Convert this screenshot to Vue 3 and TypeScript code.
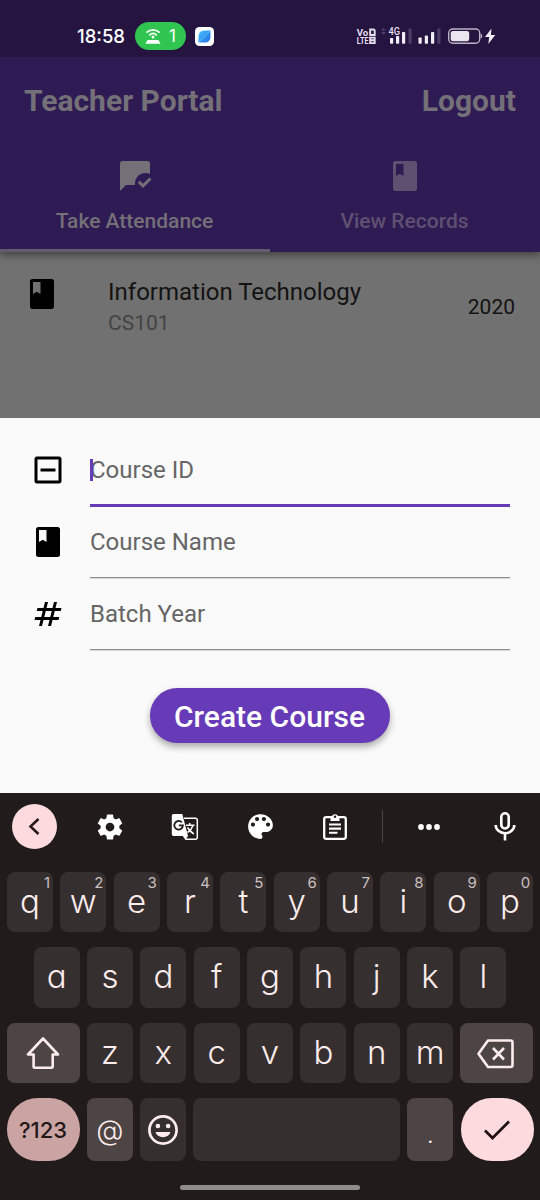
<script setup lang="ts">
import { ref } from 'vue'

interface Key {
  label: string
  hint?: string
}

interface Field {
  label: string
  icon: string
}

const bookIcon =
  'M18.5 2h-13C4.67 2 4 2.67 4 3.5v17c0 .83.67 1.5 1.5 1.5h13c.83 0 1.5-.67 1.5-1.5v-17c0-.83-.67-1.5-1.5-1.5zM6 4h5v8l-2.500-1.500L6 12V4z'
const chatReadIcon =
  'M12 17c0-3.870 3.130-7 7-7 1.080 0 2.090.250 3 .680V3.500C22 2.700 21.300 2 20.500 2h-17C2.700 2 2 2.700 2 3.500V22l4-4h6v0c0-.170.010-.330.030-.500C12.010 17.340 12 17.170 12 17zM23 14.340l-1.410-1.410-4.240 4.240-2.120-2.120-1.410 1.410L17.340 20 23 14.340z'
const boxMinusIcon =
  'M19.500 3h-15C3.700 3 3 3.700 3 4.500v15c0 .8.700 1.500 1.500 1.500h15c.8 0 1.500-.7 1.500-1.500v-15c0-.8-.7-1.500-1.500-1.500zM19 19H5V5h14v14zM7 11h10v2H7z'
const numbersIcon =
  'M20.500 10L21 8h-4l1-4h-2l-1 4h-4l1-4h-2L9 8H5l-.5 2h4l-1 4h-4L3 16h4l-1 4h2l1-4h4l-1 4h2l1-4h4l.5-2h-4l1-4h4zM13.500 14h-4l1-4h4l-1 4z'

const fields: Field[] = [
  { label: 'Course ID', icon: boxMinusIcon },
  { label: 'Course Name', icon: bookIcon },
  { label: 'Batch Year', icon: numbersIcon },
]
const focused = ref(0)

const topRow: Key[] = [...'qwertyuiop'].map((label, i) => ({ label, hint: String((i + 1) % 10) }))
const homeRow: Key[] = [...'asdfghjkl'].map((label) => ({ label }))
const lowerRow: Key[] = [...'zxcvbnm'].map((label) => ({ label }))
</script>

<template>
  <div class="phone">
    <header class="appbar">
      <div class="status">
        <span class="clock">18:58</span>
        <span class="hotspot">
          <svg width="16" height="18" viewBox="0 0 16 18">
            <g fill="none" stroke="#fff" stroke-width="1.7" stroke-linecap="round">
              <path d="M2 5.200a9 9 0 0 1 12 0" />
              <path d="M4.700 7.900a5 5 0 0 1 6.600 0" />
            </g>
            <circle cx="8" cy="9.900" r="1.500" fill="#fff" />
            <path d="M2.500 13h11l2 3.700H.5z" fill="#fff" />
          </svg>
          <b>1</b>
        </span>
        <svg class="app-badge" width="19" height="19" viewBox="0 0 19 19">
          <defs>
            <linearGradient id="leaf" x1="0" y1="0" x2="1" y2="1">
              <stop offset="0" stop-color="#4cc3fa" />
              <stop offset="1" stop-color="#1b6ae8" />
            </linearGradient>
          </defs>
          <rect width="19" height="19" rx="4.500" fill="#fff" />
          <path d="M3.500 15.500V9.500Q3.500 3.500 9.500 3.500H15.500V9.500Q15.500 15.500 9.500 15.500z" fill="url(#leaf)" />
          <path d="M4 15L15 4" stroke="#75d8ff" stroke-width=".6" />
        </svg>
        <svg class="signals" width="142" height="20" viewBox="355 26 142 20">
          <g fill="#e4dff0" font-family="Roboto, sans-serif" font-weight="700">
            <text x="356.800" y="35.500" font-size="9" textLength="11.500" lengthAdjust="spacingAndGlyphs">Vo</text>
            <text x="356.800" y="44" font-size="9" textLength="11.800" lengthAdjust="spacingAndGlyphs">LTE</text>
            <text x="388.500" y="35.400" font-size="10.500" font-weight="500" textLength="11.500" lengthAdjust="spacingAndGlyphs">4G</text>
          </g>
          <g fill="none" stroke="#e4dff0" stroke-width="1.900">
            <path d="M370.200 29.500h3.300q1.200 0 1.200 1.200v4.300h-4.500zM370.200 37.600h4.500v5.500h-4.500zM370.200 40.300h4.500" />
          </g>
          <path d="M381 30.500l2.500-2.500 2.500 2.500zM381 32l2.500 2.500 2.500-2.500z" fill="#51436a" />
          <g fill="#f0edf6">
            <rect x="390" y="38" width="3.200" height="5.700" rx=".8" />
            <rect x="396" y="36" width="3.200" height="7.700" rx=".8" />
            <rect x="402" y="32" width="3.200" height="11.700" rx=".8" />
            <rect x="418.500" y="37.500" width="3.200" height="6.200" rx=".8" />
            <rect x="424.800" y="35.500" width="3.200" height="8.200" rx=".8" />
            <rect x="431" y="32" width="3.200" height="11.700" rx=".8" />
          </g>
          <g fill="#4b3d65">
            <rect x="408.500" y="28.500" width="3.200" height="15.200" rx=".8" />
            <rect x="437.300" y="28.500" width="3.200" height="15.200" rx=".8" />
          </g>
          <rect x="448.700" y="29" width="31" height="14.300" rx="4" fill="none" stroke="#b9b1c6" stroke-width="1.400" />
          <rect x="450.700" y="31" width="18.500" height="10.300" rx="2.300" fill="#e9e5ee" />
          <path d="M480.700 33.500q1.600.5 1.600 2.500t-1.600 2.500z" fill="#b9b1c6" />
          <path d="M491.500 28.500L485 37h4.200l-.9 7L495.300 35h-4.400z" fill="#f0edf6" />
        </svg>
      </div>

      <div class="toolbar">
        <h1>Teacher Portal</h1>
        <span class="logout">Logout</span>
      </div>

      <nav class="tabs">
        <div class="tab active">
          <svg class="icon" viewBox="0 0 24 24"><path :d="chatReadIcon" /></svg>
          <span>Take Attendance</span>
        </div>
        <div class="tab">
          <svg class="icon" viewBox="0 0 24 24"><path :d="bookIcon" /></svg>
          <span>View Records</span>
        </div>
      </nav>
    </header>

    <main class="list">
      <div class="tile">
        <svg class="icon" viewBox="0 0 24 24"><path :d="bookIcon" /></svg>
        <div class="tile-text">
          <span class="tile-title">Information Technology</span>
          <span class="tile-sub">CS101</span>
        </div>
        <span class="tile-year">2020</span>
      </div>
    </main>

    <section class="sheet">
      <div v-for="(field, i) in fields" :key="field.label" class="field-row">
        <svg class="icon" viewBox="0 0 24 24"><path :d="field.icon" /></svg>
        <div class="field" :class="{ focused: i === focused }">
          <i v-if="i === focused" class="caret"></i>
          <span>{{ field.label }}</span>
        </div>
      </div>
      <button class="create">Create Course</button>
    </section>

    <section class="keyboard">
      <div class="tools">
        <span class="back">
          <svg width="45" height="45" viewBox="0 0 45 45">
            <path d="M26.500 15L18.500 22.500L26.500 30" fill="none" stroke="#2b1a1c" stroke-width="2.600" />
          </svg>
        </span>
        <svg width="30" height="30" viewBox="0 0 24 24" fill="#fff">
          <path
            d="M19.430 12.980c.040-.320.070-.640.070-.980s-.030-.660-.070-.980l2.110-1.650c.190-.150.240-.420.120-.640l-2-3.460c-.120-.220-.390-.300-.610-.220l-2.490 1c-.520-.400-1.080-.730-1.690-.980l-.380-2.650C14.460 2.180 14.250 2 14 2h-4c-.250 0-.460.180-.490.420l-.380 2.650c-.610.250-1.170.590-1.690.980l-2.490-1c-.230-.090-.490 0-.610.220l-2 3.460c-.130.220-.070.490.120.640l2.110 1.650c-.040.320-.070.650-.070.980s.030.660.070.980l-2.110 1.650c-.190.150-.240.420-.120.640l2 3.460c.120.220.390.300.610.220l2.490-1c.520.400 1.080.730 1.690.980l.380 2.650c.030.240.240.420.490.420h4c.250 0 .460-.180.490-.420l.380-2.650c.610-.250 1.170-.590 1.690-.980l2.490 1c.230.090.490 0 .610-.220l2-3.460c.120-.220.070-.490-.120-.640l-2.110-1.650zM12 15.500c-1.930 0-3.500-1.570-3.500-3.500s1.570-3.500 3.500-3.500 3.500 1.570 3.500 3.500-1.570 3.500-3.500 3.500z"
          />
        </svg>
        <svg width="28" height="28" viewBox="0 0 28 28">
          <path d="M13 5.300H24.500a1.800 1.800 0 0 1 1.800 1.800V24.500a1.800 1.800 0 0 1-1.800 1.800H15L12 22" fill="none" stroke="#fff" stroke-width="1.500" />
          <path d="M2.500 1H11.300L17 23H2.500A1.700 1.700 0 0 1 .8 21.300V2.700A1.700 1.700 0 0 1 2.500 1z" fill="#fff" />
          <path d="M12.500 23H17L14.500 26.500z" fill="#fff" />
          <path d="M10.800 9.400A4.300 4.300 0 1 0 11.900 12.400H7.800" fill="none" stroke="#211b1b" stroke-width="1.800" />
          <path d="M15 12.200H23.500M18.700 10v2M22 12.500Q20.500 17 16.500 19.500M16.500 14.500Q19 18.500 22.800 21" fill="none" stroke="#fff" stroke-width="1.500" />
        </svg>
        <svg width="33" height="33" viewBox="0 0 24 24" fill="#fff">
          <path
            d="M12 3c-4.970 0-9 4.030-9 9s4.030 9 9 9c.830 0 1.500-.670 1.500-1.500 0-.390-.150-.740-.390-1.010-.230-.260-.380-.610-.380-.990 0-.830.670-1.500 1.500-1.500H16c2.760 0 5-2.240 5-5 0-4.420-4.030-8-9-8zm-5.500 9c-.830 0-1.500-.670-1.500-1.500S5.670 9 6.500 9 8 9.670 8 10.500 7.330 12 6.500 12zm3-4C8.670 8 8 7.330 8 6.500S8.670 5 9.500 5s1.500.670 1.500 1.500S10.330 8 9.500 8zm5 0c-.830 0-1.500-.670-1.500-1.500S13.670 5 14.500 5s1.500.670 1.500 1.500S15.330 8 14.500 8zm3 4c-.830 0-1.500-.670-1.500-1.500S16.670 9 17.500 9s1.500.670 1.500 1.500-.670 1.500-1.500 1.500z"
          />
        </svg>
        <svg width="26" height="30" viewBox="0 0 26 30">
          <rect x="2.200" y="5.200" width="21.600" height="21.600" rx="2" fill="none" stroke="#fff" stroke-width="2.300" />
          <path d="M8.500 4.500h1.200a3.500 3.500 0 0 1 6.600 0h1.200V9h-9z" fill="#fff" />
          <circle cx="13" cy="4.800" r="1.200" fill="#211b1b" />
          <path d="M7 12.500h12M7 16.600h12M7 20.700h8.500" stroke="#fff" stroke-width="2.100" />
        </svg>
        <i class="divider"></i>
        <svg width="24" height="8" viewBox="0 0 24 8" fill="#fff">
          <circle cx="4" cy="4" r="2.900" />
          <circle cx="12" cy="4" r="2.900" />
          <circle cx="20" cy="4" r="2.900" />
        </svg>
        <svg width="24" height="30" viewBox="0 0 24 30" fill="none" stroke="#fff" stroke-width="2.600">
          <rect x="8.300" y="1.300" width="7.400" height="15.200" rx="3.700" />
          <path d="M2.700 13a9.300 8.200 0 0 0 18.600 0M12 21.200V28.500" />
        </svg>
      </div>

      <div class="keys">
        <div class="row">
          <span v-for="key in topRow" :key="key.label" class="key">
            {{ key.label }}<sup>{{ key.hint }}</sup>
          </span>
        </div>
        <div class="row">
          <span v-for="key in homeRow" :key="key.label" class="key">{{ key.label }}</span>
        </div>
        <div class="row">
          <span class="key wide alt">
            <svg width="36" height="36" viewBox="0 0 36 36">
              <path
                d="M18 3.500L33 19.500H27.700V31.500a1.200 1.200 0 0 1-1.200 1.200H9.800a1.200 1.200 0 0 1-1.200-1.200V19.500H3z"
                fill="none" stroke="#fdecec" stroke-width="2.600" stroke-linejoin="round"
              />
            </svg>
          </span>
          <span v-for="key in lowerRow" :key="key.label" class="key">{{ key.label }}</span>
          <span class="key wide alt">
            <svg class="erase" width="40" height="32" viewBox="0 0 40 32" fill="none" stroke="#fdecec" stroke-width="2.600">
              <path d="M12 2.500H34.500a2 2 0 0 1 2 2V27a2 2 0 0 1-2 2H12L2.500 15.700z" stroke-linejoin="round" />
              <path d="M17 10L28 21.500M28 10L17 21.500" />
            </svg>
          </span>
        </div>
        <div class="row last">
          <span class="key wide symbols">?123</span>
          <span class="key alt at">@</span>
          <span class="key">
            <svg width="32" height="32" viewBox="0 0 32 32">
              <circle cx="16" cy="16" r="13.600" fill="none" stroke="#fdecec" stroke-width="2.700" />
              <circle cx="10.900" cy="12" r="2.300" fill="#fdecec" />
              <circle cx="21.100" cy="12" r="2.300" fill="#fdecec" />
              <path d="M8.500 18h15a7.600 6.200 0 0 1-15 0z" fill="#fdecec" />
            </svg>
          </span>
          <span class="key space"></span>
          <span class="key alt dot">.</span>
          <span class="key wide enter">
            <svg width="30" height="24" viewBox="0 0 30 24">
              <path d="M3 12.500L10.500 20L27 3.500" fill="none" stroke="#201012" stroke-width="2.700" />
            </svg>
          </span>
        </div>
      </div>
      <i class="home"></i>
    </section>
  </div>
</template>

<style>
body {
  margin: 0;
  background: #211b1b;
}
</style>

<style scoped>
.phone {
  width: 540px;
  height: 1200px;
  overflow: hidden;
  display: flex;
  flex-direction: column;
  font-family: Roboto, sans-serif;
  background: #717171;
}
.phone svg {
  display: block;
  flex: none;
}
.icon {
  width: 36px;
  height: 36px;
  fill: currentColor;
}
.appbar {
  position: relative;
  height: 252px;
  flex: none;
  background: #2f1b54;
  box-shadow: 0 3px 8px rgba(0, 0, 0, 0.45);
}
.status {
  height: 57px;
  box-sizing: border-box;
  padding: 15px 43px 0 77px;
  display: flex;
  align-items: center;
  background: #24143f;
  font-family: Inter, sans-serif;
  color: #fff;
}
.clock {
  font-size: 18.500px;
  font-weight: 450;
  line-height: 24px;
  width: 58px;
}
.hotspot {
  width: 51px;
  height: 28px;
  border-radius: 14px;
  background: #2fc550;
  display: flex;
  align-items: center;
  gap: 8px;
  box-sizing: border-box;
  padding-left: 10px;
}
.hotspot b {
  font-size: 17px;
  font-weight: 400;
}
.app-badge {
  margin-left: 9px;
}
.signals {
  margin-left: auto;
}
.toolbar {
  height: 86px;
  padding: 0 24px;
  display: flex;
  justify-content: space-between;
  align-items: center;
  font-size: 30px;
  font-weight: 700;
  color: #747078;
}
.toolbar h1 {
  margin: 0;
  font-size: inherit;
}
.tabs {
  display: flex;
  height: 109px;
}
.tab {
  flex: 1;
  box-sizing: border-box;
  padding-top: 15px;
  display: flex;
  flex-direction: column;
  align-items: center;
  gap: 15px;
  font-size: 21px;
  font-weight: 500;
  line-height: 24px;
  color: #5f5071;
  border-bottom: 3px solid transparent;
}
.tab span {
  margin-right: 1px;
}
.tab.active {
  color: #747078;
  border-bottom-color: #625d6c;
}
.list {
  height: 166px;
  flex: none;
}
.tile {
  display: flex;
  padding: 24px 25px 0 24px;
}
.tile .icon {
  color: #000;
}
.tile-text {
  margin-left: 48px;
  padding-top: 2px;
  display: flex;
  flex-direction: column;
  gap: 5px;
}
.tile-title {
  font-size: 24px;
  line-height: 28px;
  color: #131313;
}
.tile-sub {
  font-size: 21px;
  line-height: 24px;
  color: #434343;
}
.tile-year {
  margin: 19px 0 0 auto;
  font-size: 21px;
  line-height: 24px;
  color: #131313;
}
.sheet {
  height: 375px;
  flex: none;
  box-sizing: border-box;
  padding: 17px 30px 0;
  background: #fafafa;
}
.field-row {
  height: 72px;
  display: flex;
  gap: 24px;
}
.field-row .icon {
  margin-top: 16.500px;
  color: #000;
}
.field {
  position: relative;
  flex: 1;
  height: 71px;
  box-sizing: border-box;
  border-bottom: 1px solid #8c8c8c;
  box-shadow: 0 1px 0 #d8d8d8;
  font-size: 24px;
  line-height: 70px;
  color: #666;
}
.field.focused {
  height: 72px;
  border-bottom: 3px solid #673ab7;
  box-shadow: none;
}
.caret {
  position: absolute;
  left: 0;
  top: 24px;
  width: 3px;
  height: 22px;
  background: #673ab7;
}
.create {
  display: block;
  width: 240px;
  height: 54.500px;
  margin: 37.300px auto 0;
  padding: 1px 1px 0 0;
  border: 0;
  border-radius: 27.300px;
  background: #673ab7;
  box-shadow: 0 4px 7px rgba(0, 0, 0, 0.32);
  color: #fff;
  font: 500 30px/51px Roboto, sans-serif;
}
.keyboard {
  flex: 1;
  display: flex;
  flex-direction: column;
  background: #211b1b;
  font-family: Inter, sans-serif;
  color: #fdecec;
}
.tools {
  display: grid;
  grid-template-columns: 69px 82px 68px 82px 68px 26px 68px 83px;
  align-items: center;
  justify-items: center;
  height: 67px;
  overflow: hidden;
}
.back {
  width: 45px;
  height: 45px;
  border-radius: 50%;
  background: #fddade;
}
.divider {
  width: 1px;
  height: 33px;
  background: #4a4343;
}
.keys {
  display: flex;
  flex-direction: column;
  gap: 15px;
  padding: 11.500px 6.500px 0;
}
.row {
  display: flex;
  justify-content: center;
  gap: 7.260px;
  height: 60.500px;
}
.row.last {
  height: 63px;
}
.key {
  position: relative;
  width: 46.100px;
  flex: none;
  box-sizing: border-box;
  display: flex;
  align-items: center;
  justify-content: center;
  padding-bottom: 2px;
  border-radius: 8px;
  background: #362f2f;
  font-size: 33px;
  line-height: 24px;
  font-weight: 350;
  font-feature-settings: 'cv11';
}
.key:has(svg) {
  padding-bottom: 0;
}
.key sup {
  position: absolute;
  right: 3px;
  top: 3px;
  font-size: 15px;
  line-height: 16px;
  font-weight: 400;
  color: #cbc1c1;
}
.wide {
  width: 73px;
}
.alt {
  background: #4d4544;
}
.erase {
  margin: 2px 2px 0 0;
}
.symbols {
  border-radius: 31px;
  background: #c9a4a3;
  color: #231718;
  font-size: 22px;
  font-weight: 450;
  padding: 0;
}
.at {
  font-size: 28px;
  font-weight: 300;
  padding: 0;
}
.space {
  flex: 1;
}
.dot {
  font-size: 25px;
  padding: 9px 0 0;
}
.enter {
  border-radius: 31px;
  background: #fddade;
}
.home {
  width: 180px;
  height: 5px;
  margin: 24px auto 0;
  border-radius: 3px;
  background: #8f8c8c;
}
</style>
